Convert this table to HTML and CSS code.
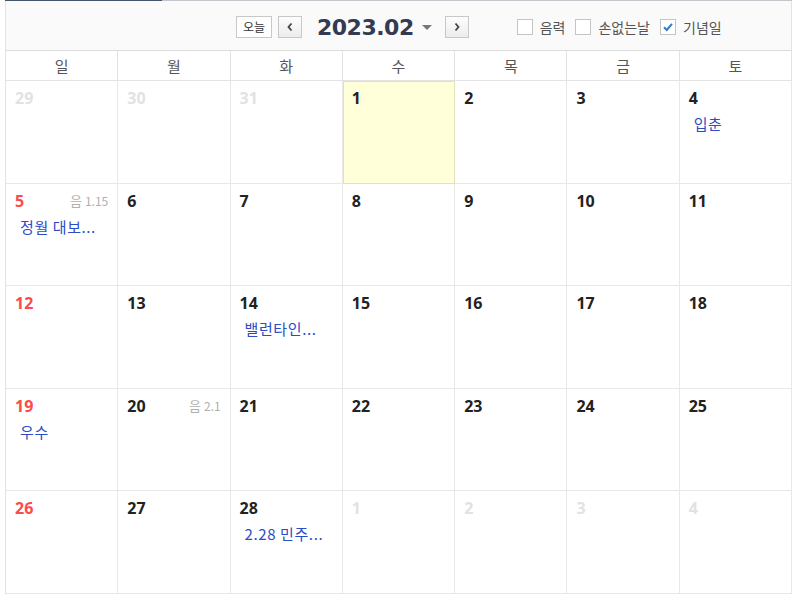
FILE: index.html
```html
<html>
  <head>
    <title>달력</title>
    <link rel="stylesheet" href="styles.css">
  </head>
  <body>
    <div id="calendar">
      <div class="topline"><span class="topline-on"></span></div>
      <div class="toolbar">
        <button class="btn-today">오늘</button>
        <button class="btn-nav">
          <svg width="8" height="10" viewBox="0 0 8 10"><path d="M5.5 1.5 L2.5 5 L5.5 8.5" fill="none" stroke="#444" stroke-width="1.8"/></svg>
        </button>
        <span class="title">2023.02</span>
        <span class="caret"></span>
        <button class="btn-nav btn-next">
          <svg width="8" height="10" viewBox="0 0 8 10"><path d="M2.5 1.5 L5.5 5 L2.5 8.5" fill="none" stroke="#444" stroke-width="1.8"/></svg>
        </button>
        <div class="opts">
          <label class="opt"><span class="box"></span>음력</label>
          <label class="opt"><span class="box"></span>손없는날</label>
          <label class="opt"><span class="box">
            <svg width="12" height="12" viewBox="0 0 12 12"><path d="M2 6.2 L4.8 9 L10 2.8" fill="none" stroke="#3a78c8" stroke-width="2"/></svg>
          </span>기념일</label>
        </div>
      </div>
      <div class="weekdays">
        <div>일</div><div>월</div><div>화</div><div>수</div><div>목</div><div>금</div><div>토</div>
      </div>
      <div class="grid" id="grid"></div>
    </div>
    <script type="text/javascript">
      var days = [
        [29, "other"], [30, "other"], [31, "other"], [1, "today"], [2], [3], [4, "", "입춘"],
        [5, "sun", "정월 대보...", "음 1.15"], [6], [7], [8], [9], [10], [11],
        [12, "sun"], [13], [14, "", "밸런타인..."], [15], [16], [17], [18],
        [19, "sun", "우수"], [20, "", "", "음 2.1"], [21], [22], [23], [24], [25],
        [26, "sun"], [27], [28, "", "2.28 민주..."], [1, "other"], [2, "other"], [3, "other"], [4, "other"]
      ];
      var html = "";
      for (var i = 0; i < days.length; i++) {
        var d = days[i];
        var cls = "cell";
        if (d[1]) cls += " " + d[1];
        html += '<div class="' + cls + '"><div class="head"><span class="num">' + d[0] + "</span>";
        if (d[3]) html += '<span class="lunar">' + d[3].replace("음 ", '<b>음</b>') + "</span>";
        html += "</div>";
        if (d[2]) html += '<div class="event">' + d[2] + "</div>";
        html += "</div>";
      }
      document.getElementById("grid").innerHTML = html;
    </script>
  </body>
</html>
```
FILE: styles.css
```css
body {
  margin: 0;
  background: #fff;
  font-family: "Noto Sans CJK KR", "Noto Sans", sans-serif;
}
#calendar {
  margin-left: 5px;
  width: 787px;
}
.topline {
  height: 1px;
  background: #c3c7cc;
}
.topline-on {
  display: block;
  width: 157px;
  height: 1px;
  background: #46566a;
}
.toolbar {
  height: 50px;
  background: #fafafa;
  border-left: 1px solid #e3e3e3;
  border-right: 1px solid #e3e3e3;
  border-bottom: 1px solid #dcdcdc;
  display: flex;
  align-items: center;
  padding-left: 230px;
  padding-top: 3px;
  box-sizing: border-box;
}
button {
  font-family: inherit;
  padding: 0;
  cursor: pointer;
}
.btn-today {
  width: 36px;
  height: 22px;
  border: 1px solid #c8c8c8;
  background: #fff;
  font-size: 12px;
  color: #333;
  line-height: 18px;
}
.btn-nav {
  width: 24px;
  height: 22px;
  margin-left: 6px;
  border: 1px solid #c8c8c8;
  background: linear-gradient(#fdfdfd, #ececec);
  display: flex;
  align-items: center;
  justify-content: center;
}
.btn-next {
  margin-left: 13px;
}
.title {
  margin-left: 15px;
  font-family: "DejaVu Sans", sans-serif;
  font-weight: bold;
  font-size: 22px;
  letter-spacing: -0.5px;
  color: #343a52;
}
.caret {
  margin-left: 8px;
  width: 0;
  height: 0;
  border-left: 5px solid transparent;
  border-right: 5px solid transparent;
  border-top: 5px solid #777;
}
.opts {
  display: flex;
  margin-left: 48px;
  gap: 10px;
}
.opt {
  display: flex;
  align-items: center;
  font-size: 14px;
  color: #555;
}
.box {
  width: 14px;
  height: 14px;
  border: 1px solid #c4c4c4;
  background: #fff;
  margin-right: 7px;
  display: flex;
  align-items: center;
  justify-content: center;
}
.weekdays {
  display: grid;
  grid-template-columns: repeat(7, 1fr);
  border-left: 1px solid #e3e3e3;
  border-bottom: 1px solid #e3e3e3;
}
.weekdays div {
  height: 29px;
  line-height: 29px;
  text-align: center;
  font-size: 15px;
  color: #555;
  border-right: 1px solid #e3e3e3;
}
.grid {
  display: grid;
  grid-template-columns: repeat(7, 1fr);
  border-left: 1px solid #e3e3e3;
}
.cell {
  height: 94.6px;
  border-right: 1px solid #e8e8e8;
  border-bottom: 1px solid #e8e8e8;
  padding: 7px 9px 0 9px;
}
.cell.today {
  background: #ffffd9;
  outline: 1px solid #e3e2b8;
  outline-offset: -1px;
}
.head {
  display: flex;
  justify-content: space-between;
  align-items: center;
  height: 20px;
}
.num {
  font-family: "Noto Sans", sans-serif;
  font-weight: bold;
  font-size: 16px;
  color: #222;
}
.sun .num {
  color: #ff4a4a;
}
.other .num {
  color: #e2e2e2;
}
.lunar {
  font-size: 12px;
  color: #b0b0b0;
}
.lunar b {
  font-weight: normal;
  font-size: 13px;
  margin-right: 3px;
}
.event {
  margin-top: 5px;
  padding-left: 5px;
  font-size: 15px;
  letter-spacing: 0.6px;
  color: #2a4cc4;
}
```
